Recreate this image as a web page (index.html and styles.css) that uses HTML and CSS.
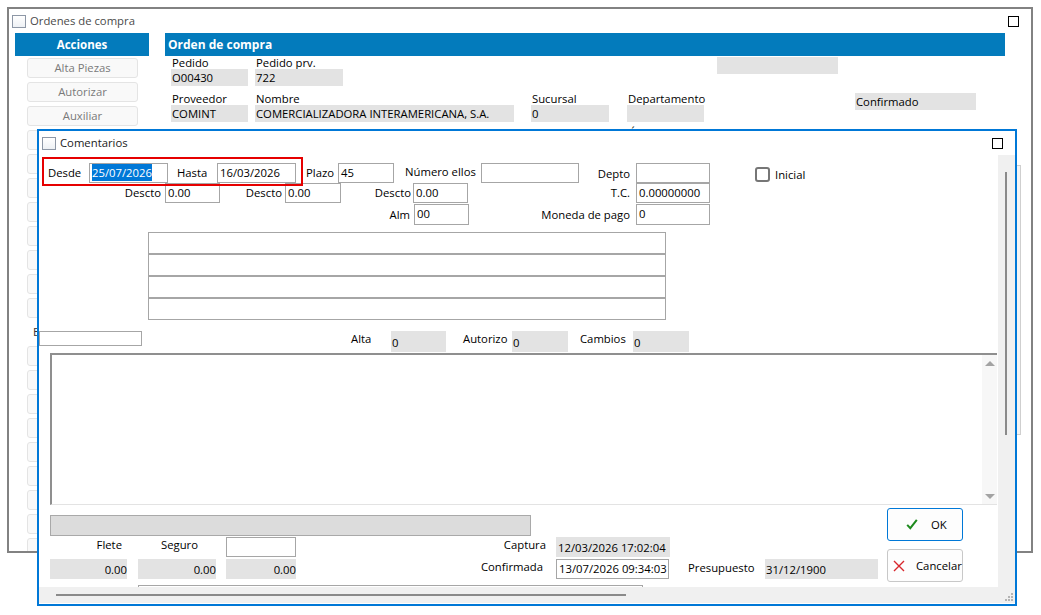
FILE: index.html
```html
<!DOCTYPE html>
<html lang="es">
<head>
    <meta charset="UTF-8">
    <meta name="viewport" content="width=device-width, initial-scale=1.0">
    <title>Ordenes de compra</title>
    <link rel="stylesheet" href="styles.css">
</head>
<body>
<div class="desk">

    <!-- ventana principal -->
    <div class="win win-main">
        <div class="titlebar">
            <span class="win-icon"></span>
            <span class="win-title">Ordenes de compra</span>
            <span class="max-box"></span>
        </div>
        <div class="main-body">
            <div class="acciones">
                <div class="band band-center">Acciones</div>
                <div class="act-list">
                    <div class="act">Alta Piezas</div>
                    <div class="act">Autorizar</div>
                    <div class="act">Auxiliar</div>
                    <!-- el resto queda detras del dialogo -->
                    <div class="act"></div>
                    <div class="act"></div>
                    <div class="act"></div>
                    <div class="act"></div>
                    <div class="act"></div>
                    <div class="act"></div>
                    <div class="act"></div>
                    <div class="act"></div>
                    <div class="act-label">E</div>
                    <div class="act"></div>
                    <div class="act"></div>
                    <div class="act"></div>
                    <div class="act"></div>
                    <div class="act"></div>
                    <div class="act"></div>
                    <div class="act"></div>
                    <div class="act"></div>
                    <div class="act"></div>
                </div>
            </div>
            <div class="orden">
                <div class="band">Orden de compra</div>
                <div class="orow orow-1">
                    <div class="ogrp g-pedido"><div class="olbl">Pedido</div><div class="ro">O00430</div></div>
                    <div class="ogrp g-prv"><div class="olbl">Pedido prv.</div><div class="ro">722</div></div>
                    <div class="ro g-blank"></div>
                </div>
                <div class="orow orow-2">
                    <div class="ogrp g-prov"><div class="olbl">Proveedor</div><div class="ro">COMINT</div></div>
                    <div class="ogrp g-nombre"><div class="olbl">Nombre</div><div class="ro">COMERCIALIZADORA INTERAMERICANA, S.A.</div></div>
                    <div class="ogrp g-suc"><div class="olbl">Sucursal</div><div class="ro">0</div></div>
                    <div class="ogrp g-depto"><div class="olbl">Departamento</div><div class="ro"></div></div>
                    <div class="ro g-conf">Confirmado</div>
                </div>
                <div class="orow orow-3">
                    <div class="olbl g-area">Área</div>
                </div>
            </div>
            <div class="main-scroll"></div>
        </div>
    </div>

    <!-- dialogo de comentarios -->
    <div class="win win-dlg">
        <div class="titlebar">
            <span class="win-icon"></span>
            <span class="win-title dlg-title">Comentarios</span>
            <span class="max-box"></span>
        </div>
        <div class="dlg-body">
            <div class="dlg-content">
                <div class="frow row-a">
                    <span class="lbl l-desde">Desde</span>
                    <div class="tb w79"><span class="sel">25/07/2026</span></div>
                    <span class="lbl l-hasta">Hasta</span>
                    <div class="tb w79">16/03/2026</div>
                    <span class="lbl l-plazo">Plazo</span>
                    <div class="tb w56">45</div>
                    <span class="lbl l-numero">Número ellos</span>
                    <div class="tb w98"></div>
                    <span class="lbl r l-depto">Depto</span>
                    <div class="tb w74"></div>
                    <span class="chk"></span>
                    <span class="lbl l-inicial">Inicial</span>
                </div>
                <div class="frow row-b">
                    <span class="lbl r l-d1">Descto</span>
                    <div class="tb w55">0.00</div>
                    <span class="lbl r l-d2">Descto</span>
                    <div class="tb w56">0.00</div>
                    <span class="lbl r l-d3">Descto</span>
                    <div class="tb w55">0.00</div>
                    <span class="lbl r l-tc">T.C.</span>
                    <div class="tb w74">0.00000000</div>
                </div>
                <div class="frow row-c">
                    <span class="lbl r l-alm">Alm</span>
                    <div class="tb w55">00</div>
                    <span class="lbl r l-moneda">Moneda de pago</span>
                    <div class="tb w74">0</div>
                </div>
                <div class="lines">
                    <div class="line-box"></div>
                    <div class="line-box"></div>
                    <div class="line-box"></div>
                    <div class="line-box"></div>
                </div>
                <div class="frow row-d">
                    <div class="tb tb-small"></div>
                    <span class="lbl l-alta">Alta</span>
                    <div class="ro ro-low w55">0</div>
                    <span class="lbl l-autorizo">Autorizo</span>
                    <div class="ro ro-low w56">0</div>
                    <span class="lbl l-cambios">Cambios</span>
                    <div class="ro ro-low w56">0</div>
                </div>
                <div class="memo">
                    <div class="memo-bar">
                        <span class="arrow arrow-up"></span>
                        <span class="arrow arrow-down"></span>
                    </div>
                </div>
                <div class="bottom">
                    <div class="bottom-left">
                        <div class="gray-bar"></div>
                        <div class="frow row-e">
                            <span class="lbl r l-flete">Flete</span>
                            <span class="lbl r l-seguro">Seguro</span>
                            <div class="tb w70"></div>
                            <span class="lbl r l-captura">Captura</span>
                            <div class="ro w114">12/03/2026 17:02:04</div>
                        </div>
                        <div class="frow row-f">
                            <div class="ro num w77">0.00</div>
                            <div class="ro num w78">0.00</div>
                            <div class="ro num w70">0.00</div>
                            <span class="lbl r l-confirmada">Confirmada</span>
                            <div class="tb w113">13/07/2026 09:34:03</div>
                            <span class="lbl l-presupuesto">Presupuesto</span>
                            <div class="ro w113">31/12/1900</div>
                        </div>
                        <div class="cut-box"></div>
                    </div>
                    <div class="bottom-right">
                        <div class="btn btn-ok">
                            <svg width="12" height="11" viewBox="0 0 12 11"><path d="M1.2 5.8 L4.3 9.2 L10.8 0.8" fill="none" stroke="#1e8a1e" stroke-width="2"/></svg>
                            <span>OK</span>
                        </div>
                        <div class="btn btn-cancel">
                            <svg width="12" height="12" viewBox="0 0 12 12"><path d="M1 1 L11 11 M11 1 L1 11" fill="none" stroke="#d8262c" stroke-width="1.4"/></svg>
                            <span>Cancelar</span>
                        </div>
                    </div>
                </div>
                <div class="red-mark"></div>
            </div>
            <div class="vscroll"><div class="vthumb"></div></div>
            <div class="hscroll">
                <div class="hthumb"></div>
                <svg class="grip" width="10" height="9" viewBox="0 0 10 9">
                    <rect x="8" y="0" width="2" height="2" fill="#b4b4b4"/>
                    <rect x="5" y="3" width="2" height="2" fill="#b4b4b4"/>
                    <rect x="8" y="3" width="2" height="2" fill="#b4b4b4"/>
                    <rect x="2" y="6" width="2" height="2" fill="#b4b4b4"/>
                    <rect x="5" y="6" width="2" height="2" fill="#b4b4b4"/>
                    <rect x="8" y="6" width="2" height="2" fill="#b4b4b4"/>
                </svg>
            </div>
        </div>
    </div>

</div>
</body>
</html>
```

FILE: styles.css
```css
/* base */
* {
    margin: 0;
    padding: 0;
    box-sizing: border-box;
}

body {
    font-family: "Open Sans", "Noto Sans", sans-serif;
    font-size: 11.3px;
    color: #000;
    background: #fff;
}

.desk {
    position: relative;
    width: 1041px;
    height: 615px;
    overflow: hidden;
}

/* ventanas */
.win {
    position: absolute;
    background: #fff;
    overflow: hidden;
}

.win-main {
    left: 7px;
    top: 7px;
    width: 1026px;
    height: 546px;
    border: 2px solid #828282;
}

.win-dlg {
    left: 37px;
    top: 129px;
    width: 980px;
    height: 477px;
    border: 2px solid #0078d7;
}

.titlebar {
    display: flex;
    align-items: center;
    height: 24px;
    padding-left: 3px;
}

.win-icon {
    width: 14px;
    height: 13px;
    margin-top: 1px;
    border: 1px solid #8d97a6;
    background: linear-gradient(#ffffff, #eef1f5);
}

.win-title {
    margin-left: 4px;
    color: #4a4a4a;
    line-height: 16px;
}

.dlg-title {
    color: #1a1a1a;
}

.max-box {
    width: 11px;
    height: 11px;
    margin-left: auto;
    margin-right: 12px;
    border: 1px solid #000;
}

/* ventana principal */
.main-body {
    display: flex;
    padding-left: 6px;
}

.band {
    height: 23px;
    line-height: 23px;
    background: #037bbc;
    color: #fff;
    font-weight: bold;
    font-size: 12px;
    padding-left: 3px;
}

.band-center {
    text-align: center;
    padding-left: 0;
    font-size: 11.5px;
}

.acciones {
    width: 134px;
    flex: none;
}

.act-list {
    display: flex;
    flex-direction: column;
    gap: 4px;
    padding: 2px 0 0 12px;
}

.act {
    width: 111px;
    height: 20px;
    line-height: 18px;
    text-align: center;
    color: #7a7a7a;
    background: #f9f9f9;
    border: 1px solid #e4e4e4;
    border-radius: 3px;
}

.act-label {
    height: 20px;
    line-height: 20px;
    margin-left: 6px;
    color: #333;
}

.orden {
    width: 840px;
    flex: none;
    margin-left: 16px;
}

.orow {
    display: flex;
    align-items: flex-start;
}

.orow-1 {
    margin-top: 1px;
}

.orow-2 {
    margin-top: 7px;
}

.olbl {
    height: 12px;
    line-height: 12px;
    padding-left: 1px;
    white-space: nowrap;
}

.ro {
    height: 17px;
    line-height: 17px;
    padding-left: 1px;
    background: #e3e3e3;
    white-space: nowrap;
    overflow: hidden;
}

/* el campo tapa el descendente de la etiqueta */
.ogrp .ro {
    position: relative;
}

.g-pedido { width: 77px; margin-left: 6px; }
.g-prv { width: 88px; margin-left: 7px; }
.g-blank { width: 121px; margin-left: 374px; }
.g-prov { width: 77px; margin-left: 6px; }
.g-nombre { width: 259px; margin-left: 7px; }
.g-suc { width: 78px; margin-left: 17px; }
.g-depto { width: 77px; margin-left: 18px; }
.g-conf { width: 121px; margin-left: 151px; }
.g-area { margin-left: 463px; margin-top: 4px; height: 14px; line-height: 14px; }

.main-scroll {
    flex: none;
    width: 8px;
    height: 270px;
    margin: 132px 0 0 8px;
    background: #f4f4f4;
    border: 1px solid #cfcfcf;
}

/* dialogo */
.dlg-body {
    display: grid;
    grid-template-columns: 959px 17px;
    grid-template-rows: 432px 16px;
}

.dlg-content {
    position: relative;
    overflow: hidden;
    display: flex;
    flex-direction: column;
    align-items: flex-start;
}

.frow {
    display: flex;
    align-items: center;
    flex: none;
}

.row-a { margin-top: 8px; height: 20px; }
.row-b { height: 20px; }
.row-c { margin-top: 1px; height: 21px; }

.lbl {
    flex: none;
    white-space: nowrap;
    line-height: 16px;
}

.lbl.r {
    text-align: right;
}

.tb {
    flex: none;
    height: 100%;
    border: 1px solid #a6a6a6;
    background: #fff;
    padding-left: 2px;
    line-height: 18px;
    white-space: nowrap;
    overflow: hidden;
}

.sel {
    background: #0078d7;
    color: #fff;
    padding: 1px 0;
}

.w55 { width: 55px; }
.w56 { width: 56px; }
.w70 { width: 70px; }
.w74 { width: 74px; }
.w77 { width: 77px; }
.w78 { width: 78px; }
.w79 { width: 79px; }
.w98 { width: 98px; }
.w113 { width: 113px; }
.w114 { width: 114px; }

.l-desde { margin-left: 9px; width: 41px; }
.l-hasta { margin-left: 9px; width: 40px; }
.l-plazo { margin-left: 10px; width: 32px; }
.l-numero { margin-left: 11px; width: 76px; margin-top: -3px; }
.l-depto { width: 57px; padding-right: 6px; margin-top: 2px; }
.l-inicial { margin-left: 5px; margin-top: 3px; }

.chk {
    width: 15px;
    height: 15px;
    margin-left: 45px;
    margin-top: 3px;
    border: 2px solid #767676;
    border-radius: 3px;
}

.l-d1 { width: 126px; padding-right: 4px; }
.l-d2 { width: 65px; padding-right: 3px; }
.l-d3 { width: 72px; padding-right: 2px; }
.l-tc { width: 168px; padding-right: 6px; }
.l-alm { width: 375px; padding-right: 4px; }
.l-moneda { width: 167px; padding-right: 6px; }

.lines {
    margin: 7px 0 0 109px;
    width: 518px;
}

.line-box {
    height: 22px;
    border: 1px solid #a6a6a6;
}

.row-d {
    margin-top: 11px;
    height: 21px;
    align-items: flex-start;
}

.tb-small {
    width: 103px;
    height: 15px;
}

.ro-low {
    height: 21px;
    line-height: 16px;
    padding-top: 4px;
}

.l-alta { margin-left: 209px; width: 40px; }
.l-autorizo { margin-left: 17px; width: 49px; }
.l-cambios { margin-left: 12px; width: 53px; }

.memo {
    position: relative;
    flex: none;
    margin: 1px 0 0 11px;
    width: 947px;
    height: 152px;
    border-top: 2px solid #8f8f8f;
    border-left: 2px solid #8f8f8f;
    border-bottom: 1px solid #e3e3e3;
}

.memo-bar {
    position: absolute;
    right: 0;
    top: 0;
    bottom: 0;
    width: 15px;
    background: #f7f7f7;
}

.arrow {
    position: absolute;
    left: 3px;
    width: 0;
    height: 0;
    border-left: 5px solid transparent;
    border-right: 5px solid transparent;
}

.arrow-up {
    top: 6px;
    border-bottom: 5px solid #a3a3a3;
}

.arrow-down {
    bottom: 5px;
    border-top: 5px solid #a3a3a3;
}

.bottom {
    display: flex;
    flex: none;
}

.bottom-left {
    width: 848px;
    display: flex;
    flex-direction: column;
    align-items: flex-start;
}

.gray-bar {
    margin: 10px 0 0 11px;
    width: 481px;
    height: 21px;
    background: #dcdcdc;
    border: 1px solid #a9a9a9;
}

.row-e { margin-top: 1px; height: 20px; }
.row-f { margin-top: 2px; height: 20px; }

.row-e .ro,
.row-f .ro {
    height: 20px;
    line-height: 21px;
}

.l-flete { width: 88px; padding-right: 5px; margin-top: -4px; }
.l-seguro { width: 99px; padding-right: 28px; margin-top: -4px; }
.l-captura { width: 260px; padding-right: 10px; margin-top: -4px; }
.l-confirmada { width: 260px; padding-right: 13px; margin-top: -4px; }
.l-presupuesto { width: 96px; padding-left: 19px; margin-top: -2px; }

.row-e .ro.w114 { padding-left: 2px; }

.row-f .num {
    text-align: right;
    padding-right: 0;
}

.row-f .num.w77 { margin-left: 11px; }
.row-f .num.w78 { margin-left: 11px; }
.row-f .num.w70 { margin-left: 10px; }

.cut-box {
    margin: 6px 0 0 99px;
    width: 505px;
    height: 12px;
    border: 1px solid #a6a6a6;
}

.bottom-right {
    display: flex;
    flex-direction: column;
}

.btn {
    display: flex;
    align-items: center;
    width: 76px;
    height: 33px;
    background: #fdfdfd;
    border: 1px solid #c8c8c8;
    border-radius: 3px;
}

.btn-ok {
    margin-top: 3px;
    border-color: #0078d7;
    padding-left: 18px;
    gap: 13px;
}

.btn-cancel {
    margin-top: 8px;
    padding-left: 5px;
    gap: 11px;
}

.red-mark {
    position: absolute;
    left: 3px;
    top: 2px;
    width: 261px;
    height: 29px;
    border: 2px solid #e60000;
}

.vscroll {
    background: #f0f0f0;
    padding: 17px 0 0 7px;
}

.vthumb {
    width: 2px;
    height: 263px;
    background: #8a8a8a;
}

.hscroll {
    grid-column: 1 / 3;
    position: relative;
    background: #f0f0f0;
    padding: 7px 0 0 17px;
}

.hthumb {
    width: 570px;
    height: 2px;
    background: #8a8a8a;
}

.grip {
    position: absolute;
    right: 2px;
    bottom: 1px;
}
```
